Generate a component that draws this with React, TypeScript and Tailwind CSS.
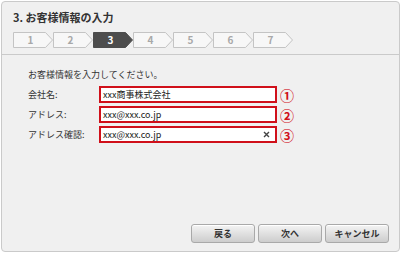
import React from 'react';

const FONT = { fontFamily: '"Noto Sans CJK JP", "Noto Sans", sans-serif' };

const STEPS = [1, 2, 3, 4, 5, 6, 7];
const CURRENT = 3;

const Step: React.FC<{ n: number; active: boolean }> = ({ n, active }) => (
  <svg width="40" height="16" viewBox="0 0 40 16" className="block shrink-0">
    <polygon
      points="0.5,0.5 32.5,0.5 39.5,8 32.5,15.5 0.5,15.5"
      fill={active ? '#4d4d4d' : '#f7f7f7'}
      stroke={active ? '#4d4d4d' : '#c4c4c4'}
      strokeWidth="1"
    />
    <text
      x="17.5"
      y="12"
      textAnchor="middle"
      fontSize="10"
      fontWeight="bold"
      fill={active ? '#ffffff' : '#a8a8a8'}
      style={FONT}
    >
      {n}
    </text>
  </svg>
);

type Field = { label: string; value: string; mark: string; clear?: boolean };

const FIELDS: Field[] = [
  { label: '会社名:', value: 'xxx商事株式会社', mark: '①' },
  { label: 'アドレス:', value: 'xxx@xxx.co.jp', mark: '②' },
  { label: 'アドレス確認:', value: 'xxx@xxx.co.jp', mark: '③', clear: true },
];

const Btn: React.FC<{ children: React.ReactNode }> = ({ children }) => (
  <button className="w-[64px] h-[19px] rounded-[3px] border border-[#a9a9a9] bg-gradient-to-b from-[#f4f4f4] to-[#cdcdcd] text-[9px] font-bold text-[#333] leading-none shadow-[inset_0_1px_0_#fff]">
    {children}
  </button>
);

export default function App() {
  return (
    <div className="w-[401px] h-[253px] bg-white p-px" style={FONT}>
      <div className="h-full rounded-[4px] border border-[#cacaca] bg-[#f0f0f0] flex flex-col">
        <div className="h-[53px] border-b border-[#cacaca] px-[11px] pt-[8px]">
          <h1 className="text-[11px] leading-[14px] font-bold text-[#333]">3. お客様情報の入力</h1>
          <div className="flex mt-[8px]">
            {STEPS.map(n => (
              <Step key={n} n={n} active={n === CURRENT} />
            ))}
          </div>
        </div>

        <div className="flex-1 flex flex-col px-[26px] pt-[14px]">
          <p className="text-[9px] leading-[12px] text-[#333]">お客様情報を入力してください。</p>
          <div className="flex flex-col gap-[3px] mt-[5px]">
            {FIELDS.map(f => (
              <div key={f.label} className="flex items-center">
                <span className="w-[71px] text-[9px] text-[#333] leading-none">{f.label}</span>
                <div className="w-[178px] h-[17px] border-2 border-[#d0101a] bg-white flex items-center px-[2px]">
                  <span className="flex-1 text-[9px] text-[#222] leading-none">{f.value}</span>
                  {f.clear && (
                    <svg width="7" height="7" viewBox="0 0 7 7" className="mr-[3px]">
                      <path d="M1 1L6 6M6 1L1 6" stroke="#444" strokeWidth="1.4" />
                    </svg>
                  )}
                </div>
                <span className="ml-[3px] text-[14px] font-bold leading-none text-[#d0101a]">{f.mark}</span>
              </div>
            ))}
          </div>

          <div className="mt-auto flex justify-end gap-[3px] pb-[8px] -mr-[16px]">
            <Btn>戻る</Btn>
            <Btn>次へ</Btn>
            <Btn>キャンセル</Btn>
          </div>
        </div>
      </div>
    </div>
  );
}
